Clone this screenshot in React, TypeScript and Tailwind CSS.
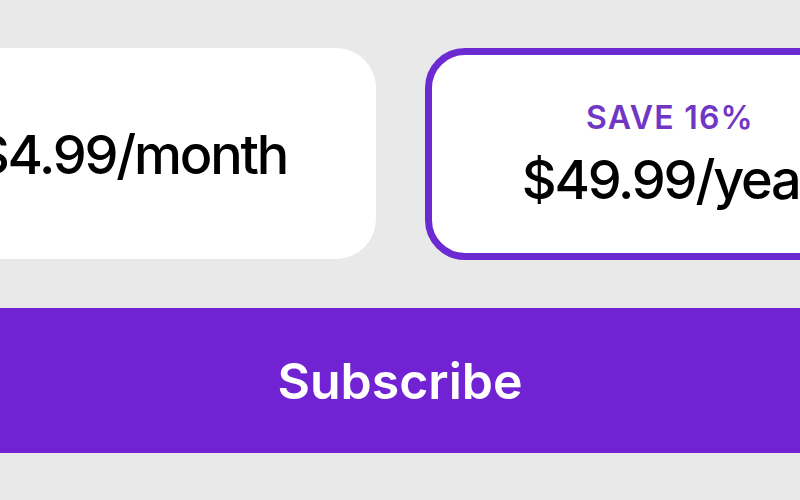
import React from "react";

export default function App() {
  return (
    <div
      className="w-[800px] h-[500px] overflow-hidden bg-[#e9e9e9] pt-[48px]"
      style={{ fontFamily: "Inter, 'Noto Sans', sans-serif" }}
    >
      <div className="flex gap-[49px] ml-[-114px]">
        <div className="w-[490px] h-[211px] shrink-0 rounded-[40px] bg-white flex items-center justify-center">
          <span className="text-[54px] font-[550] text-black leading-none tracking-[-2.2px] mt-[2px]">
            $4.99/month
          </span>
        </div>
        <div className="w-[490px] h-[212px] shrink-0 rounded-[40px] bg-white border-[7px] border-[#6c2ad2] flex flex-col items-center justify-center">
          <span className="text-[32px] font-semibold text-[#6f37c4] leading-none tracking-[1.2px]">
            SAVE 16%
          </span>
          <span className="mt-[19px] text-[54px] font-[550] text-black leading-none tracking-[-2.2px]">
            $49.99/year
          </span>
        </div>
      </div>
      <div className="mt-[48px] h-[145px] w-full bg-[#7123d4] flex items-center justify-center">
        <span className="text-[50px] font-semibold text-white leading-none">
          Subscribe
        </span>
      </div>
    </div>
  );
}
